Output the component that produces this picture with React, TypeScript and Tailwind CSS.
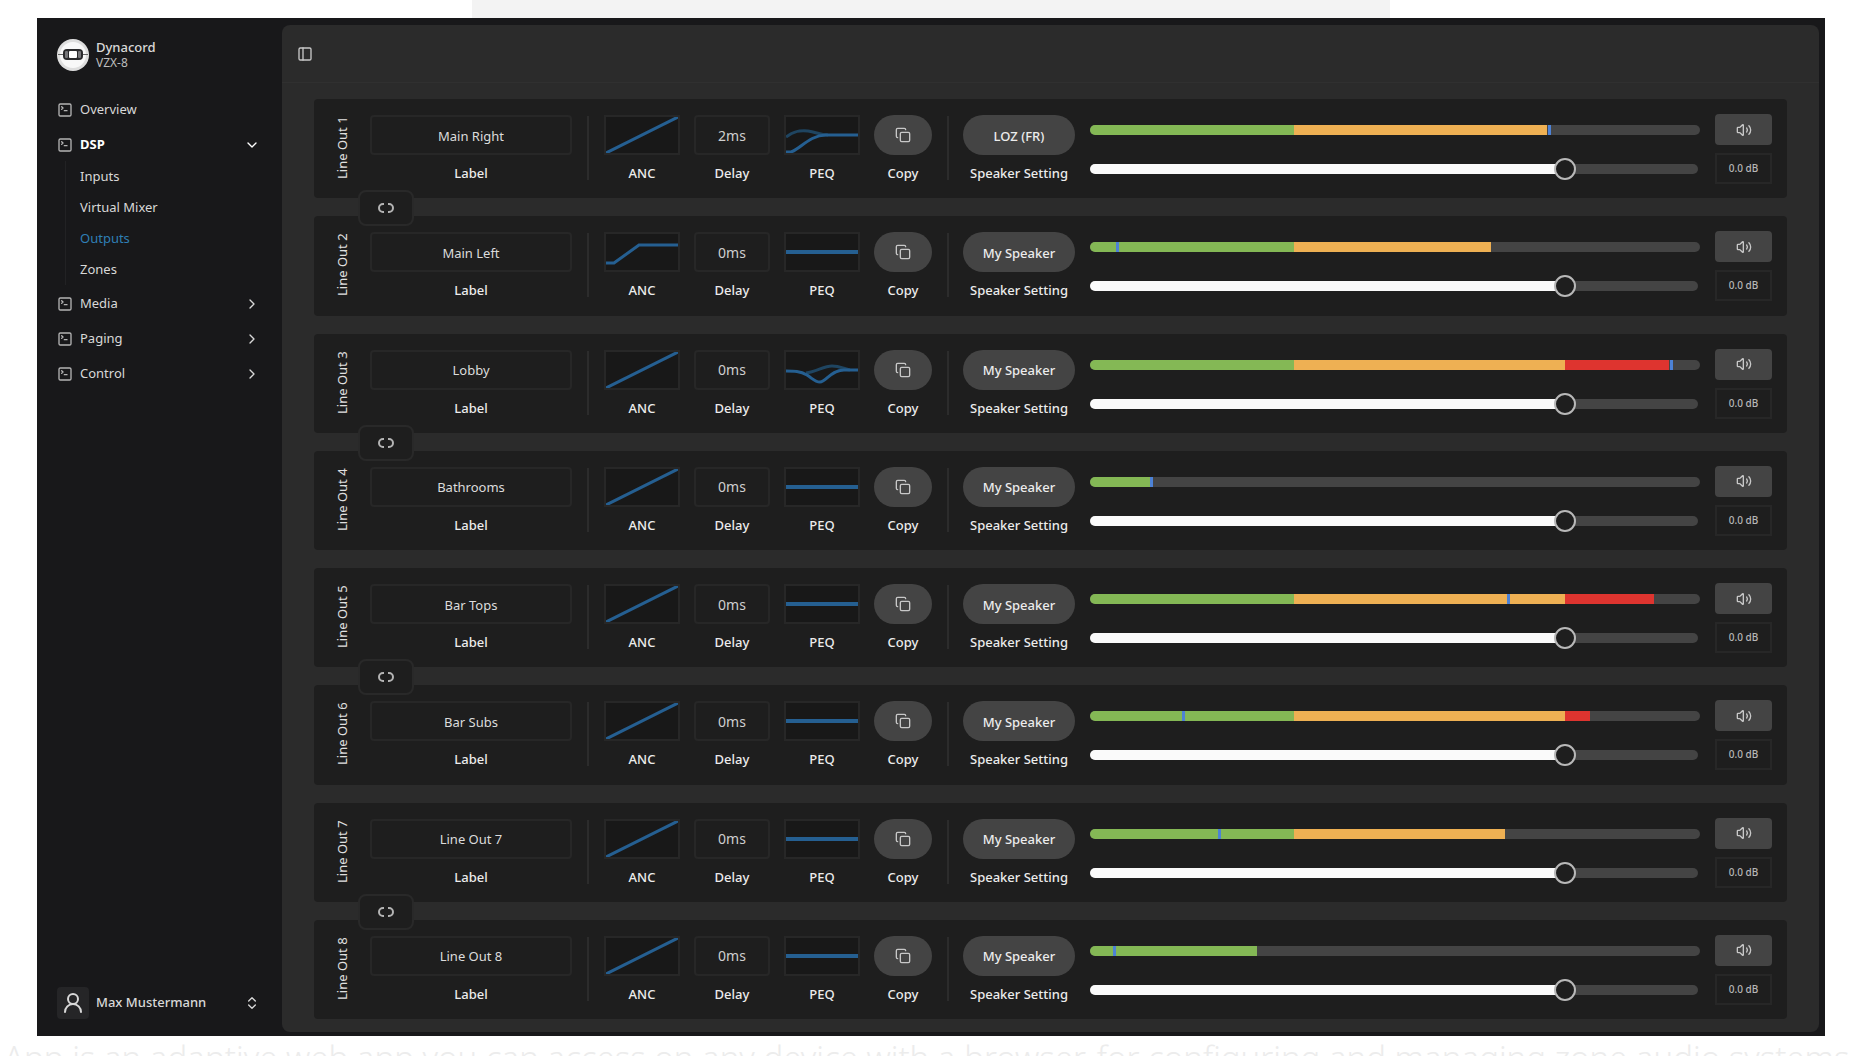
import { useState } from "react";
import {
  ChevronDown,
  ChevronRight,
  ChevronsUpDown,
  Copy,
  PanelLeft,
  SquareTerminal,
  UserRound,
  Volume2,
} from "lucide-react";

type Curve = "linear" | "limit" | "highpass" | "notch" | "flat";

interface OutputChannel {
  id: number;
  label: string;
  anc: Curve;
  delay: string;
  peq: Curve;
  speaker: string;
  level: number;
  peak: number;
}

const CHANNELS: OutputChannel[] = [
  { id: 1, label: "Main Right", anc: "linear", delay: "2ms", peq: "highpass", speaker: "LOZ (FR)", level: 75, peak: 75 },
  { id: 2, label: "Main Left", anc: "limit", delay: "0ms", peq: "flat", speaker: "My Speaker", level: 65.8, peak: 4.2 },
  { id: 3, label: "Lobby", anc: "linear", delay: "0ms", peq: "notch", speaker: "My Speaker", level: 95, peak: 95 },
  { id: 4, label: "Bathrooms", anc: "linear", delay: "0ms", peq: "flat", speaker: "My Speaker", level: 10, peak: 9.8 },
  { id: 5, label: "Bar Tops", anc: "linear", delay: "0ms", peq: "flat", speaker: "My Speaker", level: 92.5, peak: 68.3 },
  { id: 6, label: "Bar Subs", anc: "linear", delay: "0ms", peq: "flat", speaker: "My Speaker", level: 82, peak: 15 },
  { id: 7, label: "Line Out 7", anc: "linear", delay: "0ms", peq: "flat", speaker: "My Speaker", level: 68.1, peak: 21 },
  { id: 8, label: "Line Out 8", anc: "linear", delay: "0ms", peq: "flat", speaker: "My Speaker", level: 27.4, peak: 3.8 },
];

const DSP_PAGES = ["Inputs", "Virtual Mixer", "Outputs", "Zones"];

// Meter zones, in percent of the full scale
const GREEN_END = 33.4;
const ORANGE_END = 77.8;

// Fader range in dB
const MIN_DB = -76;
const MAX_DB = 20;

function Logo() {
  return (
    <svg viewBox="0 0 32 32" className="size-8 shrink-0" aria-hidden="true">
      <circle cx="16" cy="16" r="16" fill="#dedede" />
      <circle cx="16" cy="16" r="13" fill="#f8f8f8" />
      <path d="M1 15.5h6M25 15.5h6" stroke="#666" strokeWidth="1" />
      <rect x="6" y="10" width="20" height="11" rx="4" fill="#2a2a2c" />
      <rect x="8" y="12" width="3" height="7" rx="1" fill="#77777a" />
      <rect x="21" y="12" width="3" height="7" rx="1" fill="#77777a" />
      <rect x="12" y="12" width="8" height="7" rx="1" fill="#fff" />
    </svg>
  );
}

function CurvePlot({ curve }: { curve: Curve }) {
  return (
    <svg viewBox="0 0 72 36" className="h-full w-full" fill="none" stroke="#255f91" strokeWidth="3" aria-hidden="true">
      {curve === "linear" && <path d="M0 36L72 0" />}
      {curve === "limit" && <path d="M0 29H8L33 11H72" />}
      {curve === "flat" && <path d="M0 18H72" strokeWidth="4" />}
      {curve === "highpass" && (
        <>
          <path d="M0 20C8 14 14 13 22 14C30 15 34 18 42 18" stroke="#1f4561" />
          <path d="M0 35H5C14 32 24 18 40 18H72" />
        </>
      )}
      {curve === "notch" && (
        <>
          <path d="M20 21C30 20 38 14 46 14C54 14 58 17 64 18" stroke="#1f4561" />
          <path d="M0 19C8 19 14 19 21 23C27 27 29 30 34 30C40 30 45 18 58 18H72" />
        </>
      )}
    </svg>
  );
}

function LinkIcon() {
  return (
    <svg viewBox="0 0 16 10" className="h-[10px] w-4" fill="none" stroke="#b4b4b4" strokeWidth="2" aria-hidden="true">
      <path d="M6 1H5A4 4 0 0 0 5 9H6M10 1H11A4 4 0 0 1 11 9H10" />
    </svg>
  );
}

function Meter({ level, peak }: { level: number; peak: number }) {
  return (
    <div role="meter" aria-label="Level" aria-valuenow={level} className="relative h-[10px] overflow-hidden rounded-full bg-[#444444]">
      <div className="flex h-full">
        <div className="bg-[#84b855]" style={{ width: `${Math.min(level, GREEN_END)}%` }} />
        <div className="bg-[#eeb053]" style={{ width: `${Math.max(0, Math.min(level, ORANGE_END) - GREEN_END)}%` }} />
        <div className="bg-[#de342f]" style={{ width: `${Math.max(0, level - ORANGE_END)}%` }} />
      </div>
      <div className="absolute inset-y-0 w-[3px] bg-[#4d82d6]" style={{ left: `${peak}%` }} />
    </div>
  );
}

interface FaderProps {
  name: string;
  gain: number;
  onChange: (gain: number) => void;
}

function Fader({ name, gain, onChange }: FaderProps) {
  const percent = ((gain - MIN_DB) / (MAX_DB - MIN_DB)) * 100;
  return (
    <div className="relative mr-[2px] flex h-[22px] items-center">
      <div className="h-[10px] w-full overflow-hidden rounded-full bg-[#444444]">
        <div className="h-full bg-[#fafafa]" style={{ width: `${percent}%` }} />
      </div>
      <input
        type="range"
        min={MIN_DB}
        max={MAX_DB}
        value={gain}
        onChange={(e) => onChange(Number(e.target.value))}
        aria-label={`${name} volume`}
        className="absolute inset-0 m-0 w-full cursor-pointer appearance-none bg-transparent [&::-webkit-slider-thumb]:size-[22px] [&::-webkit-slider-thumb]:appearance-none [&::-webkit-slider-thumb]:rounded-full [&::-webkit-slider-thumb]:border-2 [&::-webkit-slider-thumb]:border-solid [&::-webkit-slider-thumb]:border-[#b8b8b8] [&::-webkit-slider-thumb]:bg-[#1e1e1e]"
      />
    </div>
  );
}

function Divider() {
  return <div className="mt-[2px] h-16 w-[2px] shrink-0 bg-[#2c2c2c]" />;
}

const cellClass = "flex shrink-0 flex-col items-center gap-2 pt-px text-[13px] leading-5 font-medium text-[#ececec]";
const boxClass = "h-10 w-[76px] border-2 border-[#272727]";

function ChannelRow({ channel }: { channel: OutputChannel }) {
  const [gain, setGain] = useState(0);
  const name = `Line Out ${channel.id}`;
  const labelId = `label-${channel.id}`;
  const linked = channel.id % 2 === 1;

  return (
    <section className="relative flex flex-1 items-start rounded bg-[#1e1e1e] pt-[15px] pr-[15px]">
      <h2 className="mt-[2px] ml-[18px] flex h-16 w-5 shrink-0 rotate-180 items-center justify-center text-[13px] leading-5 whitespace-nowrap text-[#e0e0e0] [writing-mode:vertical-rl]">
        {name}
      </h2>

      <div className={`${cellClass} ml-[18px]`}>
        <input
          id={labelId}
          defaultValue={channel.label}
          className="h-10 w-[202px] rounded border-2 border-[#272727] bg-transparent pt-px text-center text-[13px] font-normal text-[#dcdcdc] outline-none"
        />
        <label htmlFor={labelId}>Label</label>
      </div>

      <div className="ml-[15px]">
        <Divider />
      </div>

      <div className="ml-[15px] flex gap-[14px]">
        <div className={cellClass}>
          <button type="button" aria-label={`${name} ANC`} className={`${boxClass} bg-[#181818]`}>
            <CurvePlot curve={channel.anc} />
          </button>
          <span>ANC</span>
        </div>
        <div className={cellClass}>
          <button type="button" className={`${boxClass} rounded-sm pt-px text-sm font-normal text-[#cfcfcf]`}>
            {channel.delay}
          </button>
          <span>Delay</span>
        </div>
        <div className={cellClass}>
          <button type="button" aria-label={`${name} PEQ`} className={`${boxClass} bg-[#181818]`}>
            <CurvePlot curve={channel.peq} />
          </button>
          <span>PEQ</span>
        </div>
        <div className={cellClass}>
          <button
            type="button"
            aria-label={`Copy ${name}`}
            className="flex h-10 w-[58px] items-center justify-center rounded-full bg-[#444444] text-[#c8c8c8]"
          >
            <Copy className="size-4" />
          </button>
          <span>Copy</span>
        </div>
      </div>

      <div className="ml-[15px]">
        <Divider />
      </div>

      <div className={`${cellClass} ml-[14px]`}>
        <button type="button" className="h-10 w-28 rounded-full bg-[#444444] pt-px">
          {channel.speaker}
        </button>
        <span>Speaker Setting</span>
      </div>

      <div className="ml-[15px] flex min-w-0 flex-1 flex-col gap-[23px] pt-[11px]">
        <Meter level={channel.level} peak={channel.peak} />
        <Fader name={name} gain={gain} onChange={setGain} />
      </div>

      <div className="ml-[15px] flex w-[57px] flex-col gap-2">
        <button
          type="button"
          aria-label={`Mute ${name}`}
          className="flex h-[31px] items-center justify-center rounded-sm bg-[#444444] text-[#c8c8c8]"
        >
          <Volume2 className="size-4" />
        </button>
        <output className="flex h-[31px] items-center justify-center border-2 border-[#272727] text-[10px] font-medium text-[#b8b8b8]">
          {gain.toFixed(1)} dB
        </output>
      </div>

      {linked && (
        <button
          type="button"
          aria-label={`Link outputs ${channel.id} and ${channel.id + 1}`}
          className="absolute -bottom-7 left-11 z-10 flex h-9 w-14 items-center justify-center rounded-lg border-2 border-[#292929] bg-[#1e1e1e]"
        >
          <LinkIcon />
        </button>
      )}
    </section>
  );
}

function NavItem({ label, open }: { label: string; open?: boolean }) {
  return (
    <a href="#" className={`flex h-[35px] items-center gap-[7px] ${open ? "font-bold text-white" : ""}`}>
      <SquareTerminal className="size-4 text-[#b4b4b4]" />
      <span className="flex-1">{label}</span>
      {label !== "Overview" && (open ? <ChevronDown className="size-4" /> : <ChevronRight className="size-4" />)}
    </a>
  );
}

function Sidebar() {
  return (
    <aside className="flex w-[245px] shrink-0 flex-col pr-[22px] pl-5 text-[13px] text-[#d8d8d8]">
      <div className="mt-[21px] flex items-center gap-[7px]">
        <Logo />
        <div className="flex flex-col">
          <span className="leading-4 font-medium">Dynacord</span>
          <span className="text-xs leading-4 text-[#bdbdbd]">VZX-8</span>
        </div>
      </div>

      <nav className="mt-[21px] flex flex-col">
        <NavItem label="Overview" />
        <NavItem label="DSP" open />
        <ul className="-mt-px mb-px ml-2 flex flex-col border-l border-[#222224] pl-[14px]">
          {DSP_PAGES.map((page) => (
            <li key={page}>
              <a href="#" className={`flex h-[31px] items-center ${page === "Outputs" ? "text-[#2f7fb5]" : ""}`}>
                {page}
              </a>
            </li>
          ))}
        </ul>
        <NavItem label="Media" />
        <NavItem label="Paging" />
        <NavItem label="Control" />
      </nav>

      <button type="button" className="mt-auto mb-[17px] flex items-center gap-[7px] text-left">
        <span className="flex size-8 items-center justify-center rounded bg-[#252527]">
          <UserRound className="size-6" />
        </span>
        <span className="flex-1 font-medium">Max Mustermann</span>
        <ChevronsUpDown className="size-4" />
      </button>
    </aside>
  );
}

export default function App() {
  return (
    <div className="flex h-screen flex-col overflow-hidden bg-white font-['Noto_Sans','Open_Sans',sans-serif]">
      <div className="ml-[472px] h-[18px] w-[49.5%] shrink-0 bg-[#f3f3f3]" />

      <div className="mr-[29px] ml-[37px] flex min-h-0 flex-1 bg-[#18181a] pr-[6px]">
        <Sidebar />
        <main className="mt-[7px] mb-1 flex min-w-0 flex-1 flex-col rounded-lg bg-[#2b2b2b]">
          <header className="flex h-[58px] shrink-0 items-center border-b border-[#303030] pl-[15px]">
            <button type="button" aria-label="Toggle sidebar" className="text-[#c8c8c8]">
              <PanelLeft className="size-4" />
            </button>
          </header>
          <div className="flex flex-1 flex-col gap-[18px] pt-4 pr-8 pb-[13px] pl-8">
            {CHANNELS.map((channel) => (
              <ChannelRow key={channel.id} channel={channel} />
            ))}
          </div>
        </main>
      </div>

      <p className="h-5 shrink-0 overflow-hidden pt-[6px] pl-1 text-[33px] leading-8 font-light whitespace-nowrap text-[#ececec]">
        App is an adaptive web app you can access on any device with a browser, for configuring and managing zone audio systems
      </p>
    </div>
  );
}
